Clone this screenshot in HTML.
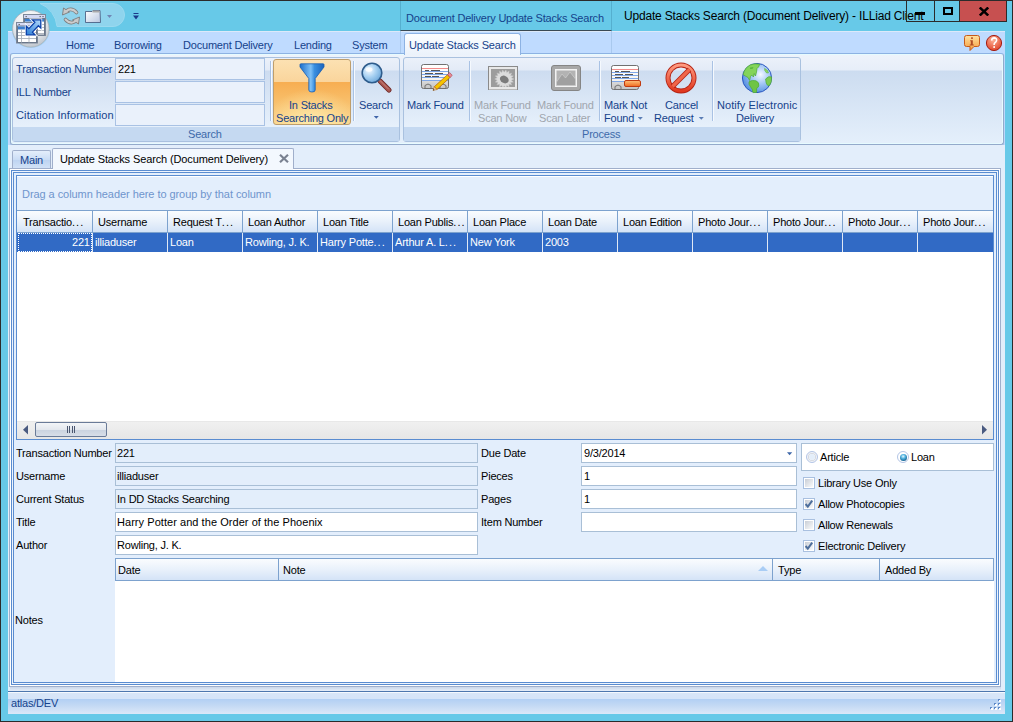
<!DOCTYPE html>
<html><head><meta charset="utf-8">
<style>
*{margin:0;padding:0;box-sizing:border-box}
html,body{width:1013px;height:722px;overflow:hidden}
body{position:relative;background:#67C9E8;font-family:"Liberation Sans",sans-serif;font-size:11px;color:#000}
.a{position:absolute}
.t{position:absolute;white-space:nowrap;font-size:11px;line-height:13px;letter-spacing:-0.2px}
.bl{color:#15428B}
.tb{position:absolute;border:1px solid #A9BFD6;background:#fff}
.ro{background:#E3EEFB}
.hdr{position:absolute;background:linear-gradient(#FAFCFE,#E9F1FB 50%,#D4E3F7);border-top:1px solid #7DA2CE;border-bottom:1px solid #7DA2CE}
.vs{position:absolute;width:1px;background:#7DA2CE}
</style></head><body>
<!-- window border -->
<div class="a" style="left:0;top:0;width:1013px;height:722px;border:1px solid #2B2B2B"></div>

<!-- QAT pill -->
<svg class="a" style="left:0;top:0;z-index:5" width="150" height="60" viewBox="0 0 150 60">
<defs>
<radialGradient id="ab" cx="0.45" cy="0.3" r="0.75"><stop offset="0" stop-color="#FFFFFF"/><stop offset="0.55" stop-color="#E9ECEF"/><stop offset="1" stop-color="#B9C0C8"/></radialGradient>
<linearGradient id="fold" x1="0" y1="0" x2="1" y2="1"><stop offset="0" stop-color="#FFFFFF"/><stop offset="1" stop-color="#B8C6E0"/></linearGradient>
<linearGradient id="arr" x1="0" y1="1" x2="1" y2="0"><stop offset="0" stop-color="#2A7DD6"/><stop offset="1" stop-color="#B4DAFC"/></linearGradient>
</defs>
<path d="M40 3.5 L113 3.5 A11.5 11.5 0 0 1 113 26.5 L57 26.5 A27 27 0 0 0 40 3.5 Z" fill="#8FD4ED" stroke="#9BDAF0" stroke-width="1"/>
<!-- refresh -->
<path d="M76.5 12.5 Q72 7.5 67 10.5" fill="none" stroke="#7C7C7C" stroke-width="3.6" stroke-linecap="round"/>
<path d="M65.5 19.5 Q70 24.5 75 21.5" fill="none" stroke="#7C7C7C" stroke-width="3.6" stroke-linecap="round"/>
<path d="M62.5 15 L63.5 8 L69.5 12 Z" fill="#C9C9C9" stroke="#7C7C7C" stroke-width="0.9" stroke-linejoin="round"/>
<path d="M79.5 17 L78.5 24 L72.5 20 Z" fill="#C9C9C9" stroke="#7C7C7C" stroke-width="0.9" stroke-linejoin="round"/>
<path d="M76.5 12.5 Q72 7.5 67 10.5" fill="none" stroke="#CDCDCD" stroke-width="2" stroke-linecap="round"/>
<path d="M65.5 19.5 Q70 24.5 75 21.5" fill="none" stroke="#CDCDCD" stroke-width="2" stroke-linecap="round"/>
<!-- folder -->
<path d="M85.5 11.5 L92 11.5 L93 10.5 L100 10.5 L100.5 22.5 L85.5 22.5 Z" fill="url(#fold)" stroke="#3F5378" stroke-width="0.8"/>
<path d="M92.5 10.5 L99.5 10.5 L99.5 12.5 L92.5 12.5 Z" fill="#A9A9A9"/>
<path d="M107 15 L112 15 L109.5 18 Z" fill="#6F86B4"/>
<path d="M133.5 13 L138.5 13 L138.5 14 L133.5 14 Z M133 15.5 L139 15.5 L136 19.5 Z" fill="#1A3A8A"/>
<!-- app button -->
<circle cx="30.8" cy="28.8" r="19.2" fill="#58B8D8" opacity="0.3"/>
<circle cx="30.8" cy="28.8" r="18.3" fill="url(#ab)" stroke="#A9B2BC" stroke-width="0.8"/>
<rect x="23.5" y="14.5" width="22" height="21" fill="#E6EAF4" stroke="#7D8899"/>
<rect x="24" y="15" width="21" height="3.5" fill="#D4D9F4"/>
<rect x="25.5" y="16.2" width="1.4" height="0.9" fill="#555"/><rect x="39.5" y="16.2" width="1.4" height="0.9" fill="#555"/><rect x="42.3" y="16.2" width="1.4" height="0.9" fill="#555"/>
<rect x="24.5" y="18.5" width="20" height="16.5" fill="#fff" stroke="#6A778A"/>
<rect x="25" y="19" width="19" height="2.6" fill="#3B7ED0"/>
<path d="M25 24.5h19M25 27.5h19M25 30.5h19M25 33.5h19M29 21.6v13M37.5 21.6v13" stroke="#A9B0BA" stroke-width="0.9"/>
<rect x="16.5" y="22.5" width="21" height="20.5" fill="#E6EAF4" stroke="#7D8899"/>
<rect x="17" y="23" width="20" height="3" fill="#D4D9F4"/>
<rect x="18.5" y="24.1" width="1.4" height="0.9" fill="#555"/>
<rect x="17.5" y="26" width="19" height="16.5" fill="#fff" stroke="#6A778A"/>
<rect x="18" y="26.5" width="18" height="3" fill="#3B7ED0"/>
<path d="M18 32.5h18M18 35.5h18M18 38.5h18M21.5 29.5v13M29 29.5v13" stroke="#A9B0BA" stroke-width="0.9"/>
<path d="M40.8 19.9 L40.8 28 L38.37 25.72 L32.42 32.17 L35 34.8 L26.3 34.8 L26.3 26 L28.88 28.63 L34.83 22.18 L32.4 19.9 Z" fill="none" stroke="#FFFFFF" stroke-width="2.8"/>
<path d="M40.8 19.9 L40.8 28 L38.37 25.72 L32.42 32.17 L35 34.8 L26.3 34.8 L26.3 26 L28.88 28.63 L34.83 22.18 L32.4 19.9 Z" fill="url(#arr)" stroke="#0A3FA8" stroke-width="1.3" stroke-linejoin="miter"/>
</svg>
<!-- contextual header -->
<div class="a" style="left:400px;top:1px;width:212px;height:30px;border-left:1px solid #55AFCF;border-right:1px solid #55AFCF;border-bottom:1px solid #3A4A55"></div>
<div class="t bl" style="left:406px;top:12px">Document Delivery Update Stacks Search</div>
<div class="t" style="left:624px;top:9px;font-size:12px;line-height:14px;letter-spacing:-0.18px">Update Stacks Search (Document Delivery) - ILLiad Client</div>

<!-- caption buttons -->
<div class="a" style="left:906px;top:0;width:101px;height:22px;border:1px solid #2B2B2B"></div>
<div class="a" style="left:934px;top:0;width:1px;height:22px;background:#2B2B2B"></div>
<div class="a" style="left:959px;top:0;width:1px;height:22px;background:#2B2B2B"></div>
<div class="a" style="left:960px;top:1px;width:46px;height:20px;background:#C75050"></div>
<div class="a" style="left:915px;top:12px;width:10px;height:3px;background:#000"></div>
<div class="a" style="left:943px;top:7px;width:10px;height:8px;border:2px solid #000"></div>
<svg class="a" style="left:979px;top:7px" width="10" height="9" viewBox="0 0 10 9"><path d="M0.8 0.5 L9.2 8.5 M9.2 0.5 L0.8 8.5" stroke="#000" stroke-width="2.4"/></svg>


<!-- ribbon -->
<div class="a" style="left:8px;top:31px;width:997px;height:114px;background:#BFDBFF;border-top:1px solid #DCE9F9"></div>
<div class="t bl" style="left:66px;top:39px">Home</div>
<div class="t bl" style="left:114px;top:39px">Borrowing</div>
<div class="t bl" style="left:183px;top:39px">Document Delivery</div>
<div class="t bl" style="left:294px;top:39px">Lending</div>
<div class="t bl" style="left:352px;top:39px">System</div>
<svg class="a" style="left:963px;top:34px" width="40" height="18" viewBox="0 0 40 18">
<defs><linearGradient id="ib" x1="0" y1="0" x2="0" y2="1"><stop offset="0" stop-color="#FFE2A0"/><stop offset="1" stop-color="#F49A3A"/></linearGradient>
<radialGradient id="hb" cx="0.45" cy="0.3" r="0.7"><stop offset="0" stop-color="#FFB49A"/><stop offset="1" stop-color="#E0452A"/></radialGradient></defs>
<path d="M3.5 1.5 L14.5 1.5 Q16.5 1.5 16.5 3.5 L16.5 10.5 Q16.5 12.5 14.5 12.5 L11 12.5 L7 16.5 L7 12.5 L3.5 12.5 Q1.5 12.5 1.5 10.5 L1.5 3.5 Q1.5 1.5 3.5 1.5 Z" fill="url(#ib)" stroke="#C65A1A" stroke-width="1"/>
<path d="M8.2 3.3h1.6v1.6h-1.6z M7.2 6.2h2.6v4.3h1v1h-4v-1h1v-3.3h-0.6z" fill="#B04A22"/>
<circle cx="31" cy="9" r="7.6" fill="url(#hb)" stroke="#A51E14" stroke-width="1"/>
<path d="M28.6 6.6 Q28.8 3.9 31.2 3.9 Q33.7 4 33.6 6.3 Q33.5 7.8 31.9 8.8 Q31.1 9.4 31.1 10.9" fill="none" stroke="#fff" stroke-width="1.6"/>
<rect x="30.3" y="12.2" width="1.7" height="1.7" fill="#fff"/>
</svg>
<div class="a" style="left:400px;top:31px;width:1px;height:22px;background:#A9C9EE"></div>
<div class="a" style="left:611px;top:31px;width:1px;height:22px;background:#A9C9EE"></div>
<!-- ribbon panel -->
<div class="a" style="left:10px;top:53px;width:994px;height:92px;border:1px solid #94AACB;border-top-color:#8DB2E3;border-radius:3px;box-shadow:inset 0 0 0 1px #E6FBFF,0 1px 1px rgba(110,130,160,0.35);background:linear-gradient(#EEF3FB 0,#E7EEF9 16px,#CCDCF0 17px,#E4EFFB 88px)"></div>
<!-- contextual tab -->
<div class="a" style="left:404px;top:33px;width:117px;height:22px;border:1px solid #8DB2E3;border-bottom:none;border-radius:3px 3px 0 0;background:linear-gradient(#FBFDFF,#EBF2FB)"></div>
<div class="t bl" style="left:409px;top:39px;letter-spacing:-0.14px">Update Stacks Search</div>

<!-- groups -->
<div class="a" style="left:12px;top:57px;width:388px;height:85px;border:1px solid #A9C1DF;border-radius:3px;background:linear-gradient(#EBF1FA 0,#E3EBF7 12px,#CDDCF0 13px,#E6F0FB 68px)"></div>
<div class="a" style="left:13px;top:127px;width:386px;height:14px;background:#C5D9F1"></div>
<div class="t" style="left:188px;top:128px;color:#3E6AAA">Search</div>

<div class="a" style="left:403px;top:57px;width:398px;height:85px;border:1px solid #A9C1DF;border-radius:3px;background:linear-gradient(#EBF1FA 0,#E3EBF7 12px,#CDDCF0 13px,#E6F0FB 68px)"></div>
<div class="a" style="left:404px;top:127px;width:396px;height:14px;background:#C5D9F1"></div>
<div class="t" style="left:582px;top:128px;color:#3E6AAA">Process</div>


<!-- search group content -->
<div class="t bl" style="left:16px;top:63px;letter-spacing:-0.16px">Transaction Number</div>
<div class="t bl" style="left:16px;top:86px">ILL Number</div>
<div class="t bl" style="left:16px;top:109px;letter-spacing:0.12px">Citation Information</div>
<div class="a" style="left:115px;top:58px;width:150px;height:22px;border:1px solid #A9C2E4;background:#EAF1FB"></div>
<div class="a" style="left:115px;top:81px;width:150px;height:22px;border:1px solid #A9C2E4;background:#EAF1FB"></div>
<div class="a" style="left:115px;top:104px;width:150px;height:22px;border:1px solid #A9C2E4;background:#EAF1FB"></div>
<div class="t" style="left:118px;top:63px">221</div>
<div class="a" style="left:270px;top:61px;width:1px;height:60px;background:#A9C2E4;box-shadow:1px 0 0 #F5F9FE"></div>
<div class="a" style="left:273px;top:59px;width:78px;height:66px;border:1px solid #BE9E6C;border-radius:3px;background:radial-gradient(ellipse 60% 55% at 50% 100%,rgba(254,236,172,0.95) 0,rgba(254,236,172,0) 100%),linear-gradient(#FCE1B2,#FAD59C 34%,#F7AE52 35%,#F8BC66 60%,#FAD48C)"></div>
<svg class="a" style="left:298px;top:62px" width="28" height="32" viewBox="0 0 28 32">
<defs><linearGradient id="fg" x1="0" x2="1"><stop offset="0" stop-color="#1D6FCC"/><stop offset="0.45" stop-color="#7EC0F6"/><stop offset="0.6" stop-color="#3A8FE0"/><stop offset="1" stop-color="#1B64BD"/></linearGradient></defs>
<path d="M2 2.5 Q2 1.8 3 1.8 L25 1.8 Q26 1.8 26 2.5 L26 5 L17.2 16.5 L17.2 28 Q17.2 30 14 30 Q10.8 30 10.8 28 L10.8 16.5 L2 5 Z" fill="url(#fg)" stroke="#1A5DB0" stroke-width="0.8"/>
</svg>
<div class="t bl" style="left:289px;top:99px">In Stacks</div>
<div class="t bl" style="left:276px;top:112px">Searching Only</div>
<div class="a" style="left:353px;top:61px;width:1px;height:60px;background:#A9C2E4;box-shadow:1px 0 0 #F5F9FE"></div>
<svg class="a" style="left:360px;top:61px" width="34" height="34" viewBox="0 0 34 34">
<defs><radialGradient id="lg" cx="0.35" cy="0.35" r="0.7"><stop offset="0" stop-color="#F4FAFF"/><stop offset="0.5" stop-color="#A9D2F3"/><stop offset="1" stop-color="#6EA8DA"/></radialGradient>
<linearGradient id="hg" x1="0" x2="1"><stop offset="0" stop-color="#C57B73"/><stop offset="1" stop-color="#7A2E2B"/></linearGradient></defs>
<line x1="20" y1="20" x2="29" y2="29" stroke="#6E2A28" stroke-width="5.2" stroke-linecap="round"/>
<line x1="20" y1="20" x2="29" y2="29" stroke="#A9564F" stroke-width="3.4" stroke-linecap="round"/>
<line x1="20" y1="19.5" x2="28.5" y2="28" stroke="#C98A80" stroke-width="1" stroke-linecap="round"/>
<circle cx="12" cy="12" r="9.8" fill="url(#lg)" stroke="#2E5C8C" stroke-width="1.6"/>
<ellipse cx="9" cy="8.5" rx="3.5" ry="2.2" fill="#fff" opacity="0.8"/>
</svg>
<div class="t bl" style="left:359px;top:99px">Search</div>
<svg class="a" style="left:373px;top:115px" width="7" height="5" viewBox="0 0 7 5"><path d="M0.8 1 L5.8 1 L3.3 3.8 Z" fill="#3F64A8"/></svg>

<!-- process group content -->
<svg class="a" style="left:420px;top:63px" width="34" height="30" viewBox="0 0 34 30">
<defs><linearGradient id="cg" x1="0" y1="0" x2="0" y2="1"><stop offset="0" stop-color="#fff"/><stop offset="0.65" stop-color="#F5F3EE"/><stop offset="0.7" stop-color="#D9D9D9"/><stop offset="1" stop-color="#C4C4C4"/></linearGradient></defs>
<rect x="1.5" y="1.5" width="27" height="24" rx="2" fill="url(#cg)" stroke="#707070"/>
<line x1="2" y1="5.5" x2="28" y2="5.5" stroke="#F28A8A"/>
<line x1="2" y1="8.5" x2="28" y2="8.5" stroke="#7EA7E8"/><line x1="2" y1="11.5" x2="28" y2="11.5" stroke="#7EA7E8"/><line x1="2" y1="14.5" x2="28" y2="14.5" stroke="#7EA7E8"/><line x1="2" y1="17.5" x2="28" y2="17.5" stroke="#7EA7E8"/>
<path d="M5 7.5h4M11 7.5h9M5 10.5h8M15 10.5h8M5 13.5h6M12 13.5h7" stroke="#555" stroke-width="1.2"/>
<path d="M5 25.5 v-3 q3-3 6 0 v3" fill="none" stroke="#707070"/><path d="M20 25.5 v-3 q3-3 6 0 v3" fill="none" stroke="#707070"/>
<path d="M14.3 23.73 L27.51 11.63 L30.07 14.43 L16.86 26.53 Z" fill="#F5C400" stroke="#B25C00" stroke-width="0.7"/>
<path d="M27.51 11.63 L29.72 9.6 L32.28 12.4 L30.07 14.43 Z" fill="#E88B98" stroke="#A8404A" stroke-width="0.6"/>
<path d="M14.3 23.73 L16.86 26.53 L13 27.5 Z" fill="#F2D2A8" stroke="#B25C00" stroke-width="0.5"/>
<path d="M13 27.5 L13.52 25.99 L14.54 27.11 Z" fill="#222"/>
</svg>
<div class="t bl" style="left:407px;top:99px">Mark Found</div>
<div class="a" style="left:469px;top:61px;width:1px;height:60px;background:#A9C2E4;box-shadow:1px 0 0 #F5F9FE"></div>
<svg class="a" style="left:487px;top:65px" width="32" height="26" viewBox="0 0 32 26">
<rect x="1.5" y="1.5" width="29" height="23" fill="#E8E8E8" stroke="#8A8A8A"/>
<rect x="4" y="4" width="24" height="18" fill="#9C9C9C"/>
<polygon points="26.90,14.00 24.39,15.19 26.32,17.12 23.54,17.42 24.65,19.86 21.93,19.24 22.10,21.90 19.76,20.43 18.97,22.98 17.30,20.84 15.63,22.98 14.84,20.43 12.50,21.90 12.67,19.24 9.95,19.86 11.06,17.42 8.28,17.12 10.21,15.19 7.70,14.00 10.21,12.81 8.28,10.88 11.06,10.58 9.95,8.14 12.67,8.76 12.50,6.10 14.84,7.57 15.63,5.02 17.30,7.16 18.97,5.02 19.76,7.57 22.10,6.10 21.93,8.76 24.65,8.14 23.54,10.58 26.32,10.88 24.39,12.81" fill="#DCDCDC" stroke="#C4C4C4" stroke-width="0.5"/>
<g transform="translate(17.3 14.5) rotate(30)"><ellipse cx="0" cy="0" rx="4.6" ry="3.6" fill="#7C7C7C"/></g>
<rect x="1.5" y="1.5" width="29" height="23" fill="none" stroke="#8A8A8A"/>
<path d="M2 2 h28 v2 h-28z M2 22 h28 v2.5 h-28z" fill="#E8E8E8"/>
</svg>
<div class="t" style="left:474px;top:99px;color:#A0A6AE">Mark Found</div>
<div class="t" style="left:478px;top:112px;color:#A0A6AE">Scan Now</div>
<svg class="a" style="left:550px;top:64px" width="32" height="28" viewBox="0 0 32 28">
<rect x="1.5" y="1.5" width="29" height="25" rx="2.5" fill="#A8A8A8" stroke="#858585"/>
<rect x="5" y="5" width="22" height="18" fill="#F2F2F2"/>
<rect x="6.5" y="6.5" width="19" height="15" fill="#B3B3B3"/>
<path d="M6.5 18 L12 10 L15.5 14 L20 8 L25.5 15 L25.5 21.5 L6.5 21.5 Z" fill="#A0A0A0" stroke="#CFCFCF" stroke-width="0.7"/>
</svg>
<div class="t" style="left:537px;top:99px;color:#A0A6AE">Mark Found</div>
<div class="t" style="left:539px;top:112px;color:#A0A6AE">Scan Later</div>
<div class="a" style="left:599px;top:61px;width:1px;height:60px;background:#A9C2E4;box-shadow:1px 0 0 #F5F9FE"></div>
<svg class="a" style="left:610px;top:64px" width="32" height="28" viewBox="0 0 32 28">
<defs><linearGradient id="cg2" x1="0" y1="0" x2="0" y2="1"><stop offset="0" stop-color="#fff"/><stop offset="0.65" stop-color="#F5F3EE"/><stop offset="0.7" stop-color="#D9D9D9"/><stop offset="1" stop-color="#C4C4C4"/></linearGradient>
<linearGradient id="og" x1="0" y1="0" x2="0" y2="1"><stop offset="0" stop-color="#FFC27A"/><stop offset="1" stop-color="#F06A1E"/></linearGradient></defs>
<rect x="1.5" y="1.5" width="27" height="24" rx="2" fill="url(#cg2)" stroke="#707070"/>
<line x1="2" y1="5.5" x2="28" y2="5.5" stroke="#F28A8A"/>
<line x1="2" y1="8.5" x2="28" y2="8.5" stroke="#7EA7E8"/><line x1="2" y1="11.5" x2="28" y2="11.5" stroke="#7EA7E8"/><line x1="2" y1="14.5" x2="28" y2="14.5" stroke="#7EA7E8"/><line x1="2" y1="17.5" x2="28" y2="17.5" stroke="#7EA7E8"/>
<path d="M5 7.5h4M11 7.5h9M5 10.5h8M15 10.5h8M5 13.5h6M12 13.5h7" stroke="#555" stroke-width="1.2"/>
<path d="M5 25.5 v-3 q3-3 6 0 v3" fill="none" stroke="#707070"/>
<rect x="14.5" y="16.5" width="16" height="6" rx="1.5" fill="url(#og)" stroke="#C03A10"/>
</svg>
<div class="t bl" style="left:604px;top:99px">Mark Not</div>
<div class="t bl" style="left:604px;top:112px">Found</div>
<svg class="a" style="left:637px;top:116px" width="7" height="5" viewBox="0 0 7 5"><path d="M0.8 1 L5.8 1 L3.3 3.8 Z" fill="#5A7DB5"/></svg>
<svg class="a" style="left:665px;top:62px" width="32" height="32" viewBox="0 0 32 32">
<defs><linearGradient id="rg" x1="0" y1="0" x2="0" y2="1"><stop offset="0" stop-color="#FF9A80"/><stop offset="1" stop-color="#E0381F"/></linearGradient></defs>
<circle cx="16" cy="16" r="13" fill="none" stroke="#B52414" stroke-width="5"/>
<circle cx="16" cy="16" r="13" fill="none" stroke="url(#rg)" stroke-width="3.2"/>
<line x1="24.5" y1="7.5" x2="7.5" y2="24.5" stroke="#B52414" stroke-width="5"/>
<line x1="24.5" y1="7.5" x2="7.5" y2="24.5" stroke="#F0664A" stroke-width="3.2"/>
</svg>
<div class="t bl" style="left:665px;top:99px">Cancel</div>
<div class="t bl" style="left:654px;top:112px">Request</div>
<svg class="a" style="left:698px;top:116px" width="7" height="5" viewBox="0 0 7 5"><path d="M0.8 1 L5.8 1 L3.3 3.8 Z" fill="#5A7DB5"/></svg>
<div class="a" style="left:712px;top:61px;width:1px;height:60px;background:#A9C2E4;box-shadow:1px 0 0 #F5F9FE"></div>
<svg class="a" style="left:741px;top:62px" width="32" height="32" viewBox="0 0 32 32">
<defs><radialGradient id="gg" cx="0.62" cy="0.38" r="0.62"><stop offset="0" stop-color="#F4F9FF"/><stop offset="0.55" stop-color="#9EC3F4"/><stop offset="1" stop-color="#5E95E2"/></radialGradient></defs>
<circle cx="16" cy="16" r="14.6" fill="url(#gg)" stroke="#2A56C0" stroke-width="1"/>
<path d="M2.2 12.5 Q3.5 6 9 3 Q14 1.2 18.8 2.2 L17.5 5 L16 6.5 L15.5 10 L14.5 14 L13.2 11.5 L12.4 15 L10.8 13 L9.5 14.5 L8.6 18.5 L7 15.5 Q4 14 2.2 12.5 Z" fill="#84D45A" stroke="#4EAA35" stroke-width="0.7"/>
<path d="M9 5.5 L12.5 5 L11.5 7 L9 7 Z" fill="#5BB840"/>
<path d="M8 19.8 Q11 17.6 15 18.8 Q18.6 20.4 17.8 24 Q17 26 15.6 26.2 L15.6 30.4 L12 30.6 Q11.8 27 9.6 25 Q7.2 22.2 8 19.8 Z" fill="#6FC445" stroke="#4EAA35" stroke-width="0.7"/>
<path d="M24.6 17 Q27.6 13.6 30.6 15 Q31 20 28.4 23.6 Q26.2 24.2 25.2 21 Z" fill="#7CCB52" stroke="#4EAA35" stroke-width="0.7"/>
<path d="M23.6 6.4 L26.2 8.2 L27.6 10.8 L25.6 11 L23.8 8.6 Z" fill="#8ED863" stroke="#4EAA35" stroke-width="0.5"/>
</svg>
<div class="t bl" style="left:717px;top:99px;letter-spacing:0.05px">Notify Electronic</div>
<div class="t bl" style="left:736px;top:112px">Delivery</div>

<!-- client area below ribbon -->
<div class="a" style="left:8px;top:145px;width:997px;height:547px;background:#E3EEFB"></div>


<!-- doc tabs -->
<div class="a" style="left:12px;top:150px;width:39px;height:19px;border:1px solid #A0AFCB;border-bottom:none;border-radius:2px 2px 0 0;background:linear-gradient(#E4EEFB,#C9DCF5 50%,#BED4F1 51%,#D3E3F7)"></div>
<div class="t bl" style="left:20px;top:154px">Main</div>
<div class="a" style="left:52px;top:148px;width:242px;height:21px;border:1px solid #A0AFCB;border-bottom:none;border-radius:2px 2px 0 0;background:#F3F8FE"></div>
<div class="t" style="left:60px;top:153px;letter-spacing:-0.12px">Update Stacks Search (Document Delivery)</div>
<svg class="a" style="left:279px;top:154px" width="10" height="9" viewBox="0 0 10 9"><path d="M1 0.8 L9 8.2 M9 0.8 L1 8.2" stroke="#7A8291" stroke-width="2.2"/></svg>

<!-- tab page borders -->
<div class="a" style="left:9px;top:168px;width:992px;height:519px;border:1px solid #A0AFCB;background:#fff"></div>
<div class="a" style="left:10px;top:169px;width:990px;height:517px;border:1px solid #FFFFFF"></div>
<div class="a" style="left:11px;top:170px;width:988px;height:515px;border:1px solid #5A8CD0;background:#EEF4FD"></div>
<div class="a" style="left:13px;top:172px;width:984px;height:511px;border:1px solid #5A8CD0;background:#E3EEFC"></div>
<div class="a" style="left:53px;top:168px;width:240px;height:2px;background:#F3F8FE"></div>

<!-- grid -->
<div class="a" style="left:16px;top:175px;width:978px;height:265px;border:1px solid #5A8CD0;background:#fff"></div>
<div class="a" style="left:17px;top:176px;width:976px;height:34px;background:#E3EEFC;border-top:1px solid #fff"></div>
<div class="t" style="left:22px;top:188px;color:#6F95CD;letter-spacing:-0.06px">Drag a column header here to group by that column</div>
<div class="hdr" style="left:17px;top:210px;width:976px;height:23px"></div>
<div class="a" style="left:17px;top:233px;width:976px;height:19px;background:#316AC5"></div>
<div class="t" style="left:23px;top:216px">Transactio<span style="letter-spacing:1.1px">...</span></div>
<div class="t" style="left:98px;top:216px">Username</div>
<div class="vs" style="left:92px;top:211px;height:22px"></div>
<div class="a" style="left:92px;top:233px;width:1px;height:19px;background:#E0E8F5"></div>
<div class="t" style="left:95px;top:236px;color:#fff">illiaduser</div>
<div class="t" style="left:173px;top:216px">Request T<span style="letter-spacing:1.1px">...</span></div>
<div class="vs" style="left:167px;top:211px;height:22px"></div>
<div class="a" style="left:167px;top:233px;width:1px;height:19px;background:#E0E8F5"></div>
<div class="t" style="left:170px;top:236px;color:#fff">Loan</div>
<div class="t" style="left:248px;top:216px">Loan Author</div>
<div class="vs" style="left:242px;top:211px;height:22px"></div>
<div class="a" style="left:242px;top:233px;width:1px;height:19px;background:#E0E8F5"></div>
<div class="t" style="left:245px;top:236px;color:#fff">Rowling, J. K.</div>
<div class="t" style="left:323px;top:216px">Loan Title</div>
<div class="vs" style="left:317px;top:211px;height:22px"></div>
<div class="a" style="left:317px;top:233px;width:1px;height:19px;background:#E0E8F5"></div>
<div class="t" style="left:320px;top:236px;color:#fff">Harry Potte<span style="letter-spacing:1.1px">...</span></div>
<div class="t" style="left:398px;top:216px">Loan Publis<span style="letter-spacing:1.1px">...</span></div>
<div class="vs" style="left:392px;top:211px;height:22px"></div>
<div class="a" style="left:392px;top:233px;width:1px;height:19px;background:#E0E8F5"></div>
<div class="t" style="left:395px;top:236px;color:#fff">Arthur A. L<span style="letter-spacing:1.1px">...</span></div>
<div class="t" style="left:473px;top:216px">Loan Place</div>
<div class="vs" style="left:467px;top:211px;height:22px"></div>
<div class="a" style="left:467px;top:233px;width:1px;height:19px;background:#E0E8F5"></div>
<div class="t" style="left:470px;top:236px;color:#fff">New York</div>
<div class="t" style="left:548px;top:216px">Loan Date</div>
<div class="vs" style="left:542px;top:211px;height:22px"></div>
<div class="a" style="left:542px;top:233px;width:1px;height:19px;background:#E0E8F5"></div>
<div class="t" style="left:545px;top:236px;color:#fff">2003</div>
<div class="t" style="left:623px;top:216px">Loan Edition</div>
<div class="vs" style="left:617px;top:211px;height:22px"></div>
<div class="a" style="left:617px;top:233px;width:1px;height:19px;background:#E0E8F5"></div>
<div class="t" style="left:698px;top:216px">Photo Jour<span style="letter-spacing:1.1px">...</span></div>
<div class="vs" style="left:692px;top:211px;height:22px"></div>
<div class="a" style="left:692px;top:233px;width:1px;height:19px;background:#E0E8F5"></div>
<div class="t" style="left:773px;top:216px">Photo Jour<span style="letter-spacing:1.1px">...</span></div>
<div class="vs" style="left:767px;top:211px;height:22px"></div>
<div class="a" style="left:767px;top:233px;width:1px;height:19px;background:#E0E8F5"></div>
<div class="t" style="left:848px;top:216px">Photo Jour<span style="letter-spacing:1.1px">...</span></div>
<div class="vs" style="left:842px;top:211px;height:22px"></div>
<div class="a" style="left:842px;top:233px;width:1px;height:19px;background:#E0E8F5"></div>
<div class="t" style="left:923px;top:216px">Photo Jour<span style="letter-spacing:1.1px">...</span></div>
<div class="vs" style="left:917px;top:211px;height:22px"></div>
<div class="a" style="left:917px;top:233px;width:1px;height:19px;background:#E0E8F5"></div>
<div class="t" style="left:72px;top:236px;color:#fff">221</div>
<div class="a" style="left:18px;top:233px;width:74px;height:19px;border:1px dotted #fff"></div>
<!-- scrollbar -->
<div class="a" style="left:17px;top:421px;width:976px;height:18px;background:linear-gradient(#F0F0F0,#E6E6E6);border-top:1px solid #E8E8E8"></div>
<svg class="a" style="left:22px;top:424px" width="8" height="12" viewBox="0 0 8 12"><path d="M6 1 L6 10.5 L1 5.75 Z" fill="#4A5A80"/></svg>
<svg class="a" style="left:981px;top:424px" width="8" height="12" viewBox="0 0 8 12"><path d="M1 1 L1 10.5 L6 5.75 Z" fill="#4A5A80"/></svg>
<div class="a" style="left:35px;top:422px;width:72px;height:15px;border:1px solid #6A7B98;border-radius:2px;background:linear-gradient(#F3F5F8,#E4E8EE 50%,#C9D2DF 51%,#D8DEE8)"></div>
<div class="a" style="left:67px;top:426px;width:8px;height:7px;border-left:1px solid #4A5670;border-right:1px solid #4A5670"></div>
<div class="a" style="left:69px;top:426px;width:4px;height:7px;border-left:1px solid #4A5670;border-right:1px solid #4A5670"></div>

<!-- detail form -->
<div class="t" style="left:16px;top:447px">Transaction Number</div>
<div class="tb ro" style="left:115px;top:443px;width:363px;height:20px"></div>
<div class="t" style="left:117px;top:447px">221</div>
<div class="t" style="left:16px;top:470px">Username</div>
<div class="tb ro" style="left:115px;top:466px;width:363px;height:20px"></div>
<div class="t" style="left:117px;top:470px">illiaduser</div>
<div class="t" style="left:16px;top:493px">Current Status</div>
<div class="tb ro" style="left:115px;top:489px;width:363px;height:20px"></div>
<div class="t" style="left:117px;top:493px">In DD Stacks Searching</div>
<div class="t" style="left:16px;top:516px">Title</div>
<div class="tb" style="left:115px;top:512px;width:363px;height:20px"></div>
<div class="t" style="left:117px;top:516px;letter-spacing:0.05px">Harry Potter and the Order of the Phoenix</div>
<div class="t" style="left:16px;top:539px">Author</div>
<div class="tb" style="left:115px;top:535px;width:363px;height:20px"></div>
<div class="t" style="left:117px;top:539px">Rowling, J. K.</div>
<div class="t" style="left:481px;top:447px">Due Date</div>
<div class="tb" style="left:581px;top:443px;width:216px;height:20px"></div>
<div class="t" style="left:584px;top:447px">9/3/2014</div>
<div class="t" style="left:481px;top:470px">Pieces</div>
<div class="tb" style="left:581px;top:466px;width:216px;height:20px"></div>
<div class="t" style="left:584px;top:470px">1</div>
<div class="t" style="left:481px;top:493px">Pages</div>
<div class="tb" style="left:581px;top:489px;width:216px;height:20px"></div>
<div class="t" style="left:584px;top:493px">1</div>
<div class="t" style="left:481px;top:516px">Item Number</div>
<div class="tb" style="left:581px;top:512px;width:216px;height:20px"></div>
<svg class="a" style="left:786px;top:451px" width="8" height="6" viewBox="0 0 8 6"><path d="M1 1.2 L6.2 1.2 L3.6 4.2 Z" fill="#3D66A8"/></svg>
<div class="tb" style="left:801px;top:443px;width:193px;height:28px"></div>
<div class="a" style="left:806px;top:451px;width:12px;height:12px;border-radius:50%;border:1px solid #B3C5E6;background:#fff;box-shadow:inset 0 0 0 1px #F4F7FC,inset 0 0 0 2px #D5D8DE;"></div><div class="a" style="left:809px;top:454px;width:6px;height:6px;border-radius:50%;background:#E4EEFA"></div>
<div class="t" style="left:820px;top:451px">Article</div>
<div class="a" style="left:897px;top:451px;width:12px;height:12px;border-radius:50%;border:1px solid #B3C5E6;background:#fff"></div>
<div class="a" style="left:899.5px;top:453.5px;width:7px;height:7px;border-radius:50%;background:radial-gradient(circle at 45% 35%,#E6F8FF 0,#54B4E0 35%,#1C6E9E 70%,#0F4466 100%)"></div>
<div class="t" style="left:911px;top:451px">Loan</div>
<svg class="a" style="left:803px;top:477px" width="12" height="12" viewBox="0 0 12 12"><defs><linearGradient id="cb0" x1="0" y1="0" x2="1" y2="1"><stop offset="0" stop-color="#C9CED6"/><stop offset="1" stop-color="#FAFBFC"/></linearGradient></defs><rect x="0.5" y="0.5" width="11" height="11" fill="#fff" stroke="#A9C0E0"/><rect x="2" y="2" width="8" height="8" fill="url(#cb0)"/></svg>
<div class="t" style="left:818px;top:477px">Library Use Only</div>
<svg class="a" style="left:803px;top:498px" width="12" height="12" viewBox="0 0 12 12"><defs><linearGradient id="cb1" x1="0" y1="0" x2="1" y2="1"><stop offset="0" stop-color="#C9CED6"/><stop offset="1" stop-color="#FAFBFC"/></linearGradient></defs><rect x="0.5" y="0.5" width="11" height="11" fill="#fff" stroke="#A9C0E0"/><rect x="2" y="2" width="8" height="8" fill="url(#cb1)"/><path d="M2.6 6 L4.8 8.6 L9.2 2.6" fill="none" stroke="#4D6E9C" stroke-width="2"/></svg>
<div class="t" style="left:818px;top:498px">Allow Photocopies</div>
<svg class="a" style="left:803px;top:519px" width="12" height="12" viewBox="0 0 12 12"><defs><linearGradient id="cb2" x1="0" y1="0" x2="1" y2="1"><stop offset="0" stop-color="#C9CED6"/><stop offset="1" stop-color="#FAFBFC"/></linearGradient></defs><rect x="0.5" y="0.5" width="11" height="11" fill="#fff" stroke="#A9C0E0"/><rect x="2" y="2" width="8" height="8" fill="url(#cb2)"/></svg>
<div class="t" style="left:818px;top:519px">Allow Renewals</div>
<svg class="a" style="left:803px;top:540px" width="12" height="12" viewBox="0 0 12 12"><defs><linearGradient id="cb3" x1="0" y1="0" x2="1" y2="1"><stop offset="0" stop-color="#C9CED6"/><stop offset="1" stop-color="#FAFBFC"/></linearGradient></defs><rect x="0.5" y="0.5" width="11" height="11" fill="#fff" stroke="#A9C0E0"/><rect x="2" y="2" width="8" height="8" fill="url(#cb3)"/><path d="M2.6 6 L4.8 8.6 L9.2 2.6" fill="none" stroke="#4D6E9C" stroke-width="2"/></svg>
<div class="t" style="left:818px;top:540px">Electronic Delivery</div>

<!-- notes -->
<div class="t" style="left:15px;top:614px">Notes</div>
<div class="a" style="left:115px;top:558px;width:879px;height:124px;background:#fff"></div>
<div class="hdr" style="left:115px;top:558px;width:879px;height:23px;border-left:1px solid #7DA2CE;border-right:1px solid #7DA2CE"></div>
<div class="vs" style="left:278px;top:559px;height:21px"></div>
<div class="vs" style="left:772px;top:559px;height:21px"></div>
<div class="vs" style="left:879px;top:559px;height:21px"></div>
<div class="t" style="left:118px;top:564px">Date</div>
<div class="t" style="left:283px;top:564px">Note</div>
<div class="t" style="left:778px;top:564px">Type</div>
<div class="t" style="left:885px;top:564px">Added By</div>
<div class="a" style="left:758px;top:566px;width:0;height:0;border-left:5px solid transparent;border-right:5px solid transparent;border-bottom:5px solid #A9CDF5"></div>

<!-- status bar -->
<div class="a" style="left:8px;top:691px;width:997px;height:23px;border-top:1px solid #4E77AE;background:linear-gradient(#F5F9FE 0,#F5F9FE 1px,#D8E6F8 1px,#D5E4F8 7px,#B2CFF4 7px,#C2D8F4 13px,#DCE8F8 22px)"></div>
<div class="t bl" style="left:11px;top:697px">atlas/DEV</div>
<div class="a" style="left:10px;top:687px;width:991px;height:4px;background:linear-gradient(#CAD7EA,#E6EEF9)"></div>
<svg class="a" style="left:988px;top:697px" width="14" height="13" viewBox="0 0 14 13">
<g fill="#5C88C8"><rect x="10" y="2" width="2" height="2"/><rect x="6" y="6" width="2" height="2"/><rect x="10" y="6" width="2" height="2"/><rect x="2" y="10" width="2" height="2"/><rect x="6" y="10" width="2" height="2"/><rect x="10" y="10" width="2" height="2"/></g>
<g fill="#FFFFFF"><rect x="11" y="3" width="2" height="2"/><rect x="7" y="7" width="2" height="2"/><rect x="11" y="7" width="2" height="2"/><rect x="3" y="11" width="2" height="2"/><rect x="7" y="11" width="2" height="2"/><rect x="11" y="11" width="2" height="2"/></g>
<g fill="#5C88C8"><rect x="10" y="2" width="1" height="1"/></g>
</svg>

</body></html>
